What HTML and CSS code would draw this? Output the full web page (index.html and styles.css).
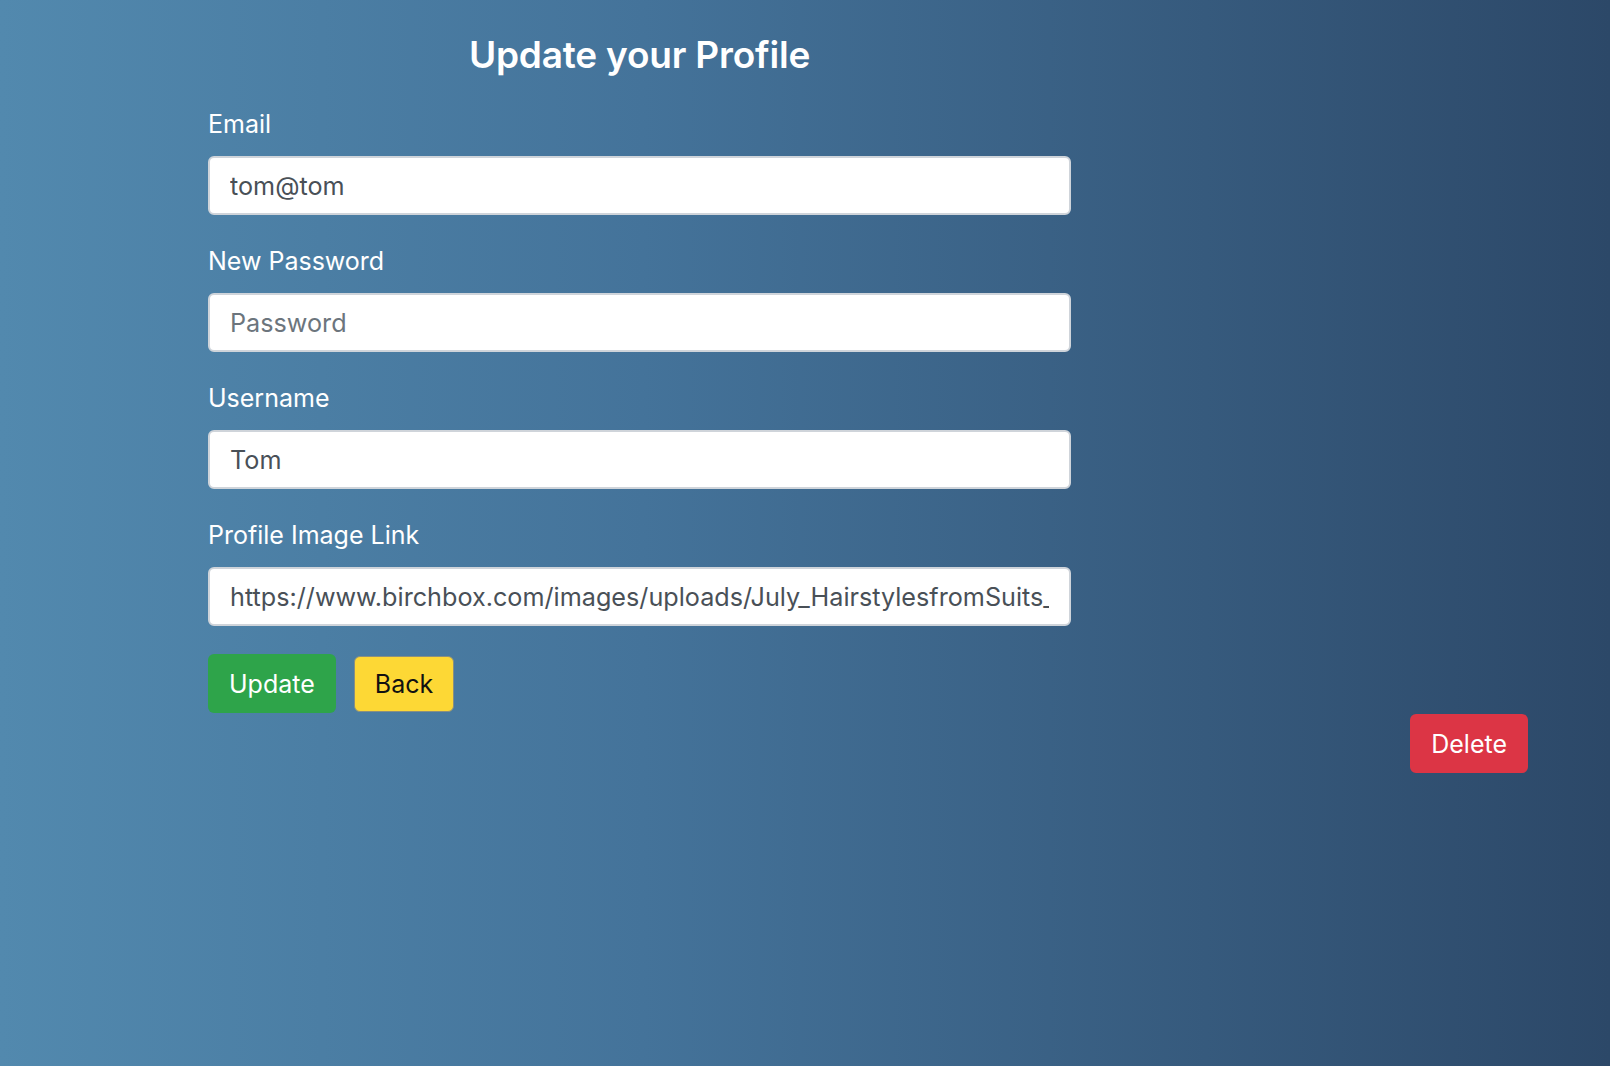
FILE: index.html
```html
<!DOCTYPE html>
<html lang="en">
<head>
<meta charset="utf-8">
<title>Update your Profile</title>
<link rel="stylesheet" href="styles.css">
</head>
<body>
<main class="page">
  <form class="profile-form">
    <h2 class="title">Update your Profile</h2>
    <div class="group">
      <label class="label" for="email">Email</label>
      <input class="field" id="email" type="email" value="tom@tom">
    </div>
    <div class="group">
      <label class="label" for="password">New Password</label>
      <input class="field" id="password" type="password" placeholder="Password">
    </div>
    <div class="group">
      <label class="label" for="username">Username</label>
      <input class="field" id="username" type="text" value="Tom">
    </div>
    <div class="group">
      <label class="label" for="image">Profile Image Link</label>
      <input class="field" id="image" type="text" value="https://www.birchbox.com/images/uploads/July_HairstylesfromSuits_1.jpg">
    </div>
    <div class="actions">
      <button type="button" class="btn btn-success">Update</button>
      <a class="btn btn-warning">Back</a>
    </div>
  </form>
  <div class="delete-row">
    <button type="button" class="btn btn-danger">Delete</button>
  </div>
</main>
</body>
</html>
```

FILE: styles.css
```css
html, body {
  margin: 0;
  padding: 0;
  height: 100%;
}
body {
  background: linear-gradient(to right, #5289ae 0%, #44739a 40%, #2c4868 100%);
  font-family: "Inter", "Noto Sans", "Liberation Sans", sans-serif;
  color: #fff;
  min-height: 1066px;
}
.page {
  padding-left: 208px;
  padding-right: 82px;
}
.profile-form {
  width: 863px;
}
.title {
  margin: 0;
  padding-top: 33px;
  height: 60px;
  text-align: center;
  font-size: 37px;
  font-weight: 600;
  line-height: 44px;
  letter-spacing: -0.2px;
}
.group {
  margin-bottom: 28px;
}
.group:first-of-type {
  margin-top: 13px;
}
.group:nth-of-type(4) {
  margin-bottom: 28px;
}
.label {
  display: block;
  font-size: 25px;
  line-height: 37px;
  margin-bottom: 13px;
}
.field {
  display: block;
  box-sizing: border-box;
  width: 100%;
  height: 59px;
  padding: 0 20px;
  border: 2px solid #cfd4da;
  border-radius: 6px;
  background: #fff;
  color: #495057;
  font-family: inherit;
  font-size: 25.2px;
  outline: none;
}
.field::placeholder {
  color: #6c757d;
}
.actions {
  display: flex;
  align-items: center;
  gap: 18px;
}
.btn {
  display: inline-flex;
  align-items: center;
  justify-content: center;
  box-sizing: border-box;
  height: 59px;
  padding: 0 21px;
  border: none;
  border-radius: 6px;
  font-family: inherit;
  font-size: 25px;
  cursor: pointer;
}
.btn-success {
  background: #2ea44a;
  color: #fff;
}
.btn-warning {
  background: #fdd835;
  color: #111;
  height: 56px;
  padding: 0 20px;
  border: 1px solid #8a8f80;
}
.btn-danger {
  background: #dc3545;
  color: #fff;
}
.delete-row {
  display: flex;
  justify-content: flex-end;
  padding-top: 1px;
}
```
